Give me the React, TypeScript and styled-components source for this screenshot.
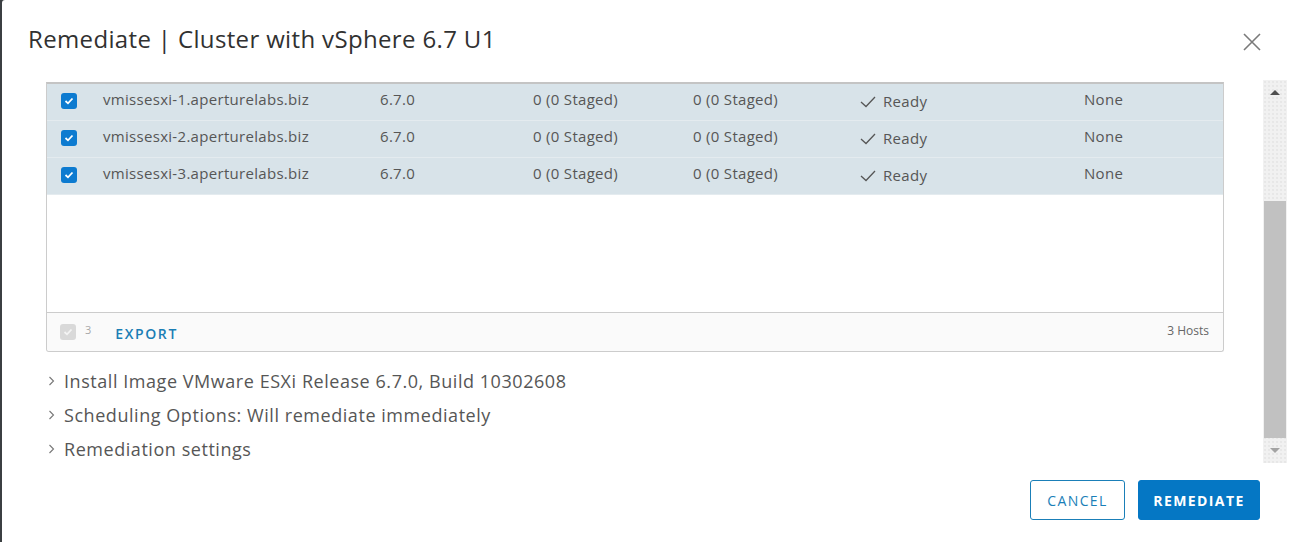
import React from "react";
import styled, { createGlobalStyle } from "styled-components";

const Global = createGlobalStyle`
  html, body { margin: 0; padding: 0; background: #3b3f42; }
  body { font-family: "Open Sans", "Liberation Sans", sans-serif; }
  * { box-sizing: border-box; }
`;

const Page = styled.div`
  width: 1292px;
  height: 542px;
  display: flex;
  background: #3b3f42;
  padding-left: 2px;
`;

const Modal = styled.div`
  flex: 1;
  background: #fff;
  border-radius: 3px 0 0 0;
  display: flex;
  flex-direction: column;
`;

const Header = styled.div`
  height: 80px;
  display: flex;
  align-items: flex-start;
  justify-content: space-between;
  padding: 23px 30px 0 26px;
`;

const Title = styled.h3`
  margin: 0;
  font-size: 24px;
  font-weight: 400;
  line-height: 32px;
  color: #313131;
  letter-spacing: 0.35px;
`;

const Close = styled.button`
  border: 0;
  background: none;
  padding: 0;
  margin-top: 9px;
  width: 20px;
  height: 20px;
  cursor: pointer;
`;

const Body = styled.div`
  height: 383px;
  display: flex;
  padding-left: 44px;
  padding-right: 5px;
`;

const Content = styled.div`
  flex: 1;
  padding-top: 2px;
  padding-right: 39px;
`;

const GridBox = styled.div`
  border: 1px solid #ccc;
  border-top: 2px solid #c4c4c4;
  border-radius: 0 0 3px 3px;
  display: flex;
  flex-direction: column;
  height: 270px;
`;

const Rows = styled.div`
  flex: 1;
`;

const Row = styled.div`
  display: grid;
  grid-template-columns: 56px 277px 153px 160px 167px 224px 1fr;
  height: 37px;
  background: #d8e3e9;
  border-bottom: 1px solid #e4ebef;
  font-size: 15px;
  letter-spacing: 0.3px;
  color: #565656;
`;

const Cell = styled.div<{ $top?: number }>`
  padding-top: ${(p) => p.$top ?? 6}px;
  line-height: 19px;
  white-space: nowrap;
  display: flex;
  align-items: flex-start;
  gap: 7px;
`;

const CheckCell = styled.div`
  padding: 9px 0 0 14px;
`;

const Box = styled.span<{ $disabled?: boolean }>`
  width: 16px;
  height: 16px;
  border-radius: 3px;
  background: ${(p) => (p.$disabled ? "#d9d9d9" : "#0d7bd0")};
  display: flex;
  align-items: center;
  justify-content: center;
`;

const GridFooter = styled.div`
  height: 39px;
  border-top: 1px solid #ccc;
  background: #fafafa;
  display: flex;
  align-items: center;
  padding: 0 14px 0 13px;
  border-radius: 0 0 3px 3px;
`;

const Count = styled.span`
  font-size: 11px;
  color: #a8a8a8;
  margin-left: 9px;
  margin-top: -6px;
`;

const Export = styled.button`
  margin-left: 24px;
  border: 0;
  background: none;
  padding: 0;
  font-family: inherit;
  font-size: 14px;
  font-weight: 600;
  letter-spacing: 1.6px;
  color: #1b7eb5;
  margin-top: 2px;
`;

const Hosts = styled.span`
  margin-left: auto;
  font-size: 12px;
  color: #666;
  margin-top: -3px;
`;

const Sections = styled.div`
  margin-top: 12px;
`;

const Section = styled.div`
  height: 34px;
  display: flex;
  align-items: center;
  gap: 8px;
  padding-left: 2px;
  font-size: 18px;
  letter-spacing: 0.55px;
  color: #565656;
`;

const Scrollbar = styled.div`
  width: 24px;
  display: flex;
  flex-direction: column;
  background-color: #f1f1f1;
  background-image: radial-gradient(#dcdcdc 0.6px, transparent 0.8px);
  background-size: 4px 4px;
`;

const Arrow = styled.div<{ $down?: boolean }>`
  height: 25px;
  display: flex;
  align-items: center;
  justify-content: center;
  &::after {
    content: "";
    width: 0;
    height: 0;
    border-left: 5px solid transparent;
    border-right: 5px solid transparent;
    ${(p) =>
      p.$down
        ? "border-top: 5px solid #a3a3a3;"
        : "border-bottom: 5px solid #505050;"}
  }
`;

const Track = styled.div`
  flex: 1;
  display: flex;
  flex-direction: column;
  padding: 96px 1px 0 1px;
`;

const Thumb = styled.div`
  flex: 1;
  background: #c1c1c1;
`;

const Footer = styled.div`
  flex: 1;
  display: flex;
  justify-content: flex-end;
  align-items: flex-start;
  gap: 13px;
  padding: 17px 32px 0 0;
`;

const Button = styled.button<{ $primary?: boolean }>`
  height: 40px;
  padding: 0 14px;
  border-radius: 3px;
  font-family: inherit;
  font-size: 14px;
  font-weight: ${(p) => (p.$primary ? 700 : 500)};
  letter-spacing: 1.4px;
  border: 1px solid ${(p) => (p.$primary ? "#0577c4" : "#1a7fb8")};
  background: ${(p) => (p.$primary ? "#0577c4" : "#fff")};
  color: ${(p) => (p.$primary ? "#fff" : "#1a7fb8")};
  min-width: ${(p) => (p.$primary ? 122 : 95)}px;
`;

const Tick = ({ color = "#fff" }: { color?: string }) => (
  <svg width="10" height="8" viewBox="0 0 10 8">
    <path d="M1.5 4 L4 6.3 L8.5 1.5" fill="none" stroke={color} strokeWidth="1.8" />
  </svg>
);

const ReadyCheck = () => (
  <svg width="16" height="12" viewBox="0 0 16 12" style={{ marginTop: 4 }}>
    <path d="M1 6 L6 10.5 L15 1" fill="none" stroke="#565656" strokeWidth="1.3" />
  </svg>
);

const Chevron = () => (
  <svg width="8" height="10" viewBox="0 0 8 10">
    <path d="M1.5 1 L5.5 5 L1.5 9" fill="none" stroke="#777" strokeWidth="1.1" />
  </svg>
);

const hosts = [
  "vmissesxi-1.aperturelabs.biz",
  "vmissesxi-2.aperturelabs.biz",
  "vmissesxi-3.aperturelabs.biz",
];

const sections = [
  "Install Image VMware ESXi Release 6.7.0, Build 10302608",
  "Scheduling Options: Will remediate immediately",
  "Remediation settings",
];

export default function App() {
  return (
    <>
      <Global />
      <Page>
        <Modal>
          <Header>
            <Title>Remediate | Cluster with vSphere 6.7 U1</Title>
            <Close aria-label="Close">
              <svg width="20" height="20" viewBox="0 0 20 20">
                <path d="M2 2 L18 18 M18 2 L2 18" stroke="#7a7a7a" strokeWidth="1.6" />
              </svg>
            </Close>
          </Header>
          <Body>
            <Content>
              <GridBox>
                <Rows>
                  {hosts.map((h) => (
                    <Row key={h}>
                      <CheckCell>
                        <Box>
                          <Tick />
                        </Box>
                      </CheckCell>
                      <Cell>{h}</Cell>
                      <Cell>6.7.0</Cell>
                      <Cell>0 (0 Staged)</Cell>
                      <Cell>0 (0 Staged)</Cell>
                      <Cell $top={8}>
                        <ReadyCheck />
                        Ready
                      </Cell>
                      <Cell>None</Cell>
                    </Row>
                  ))}
                </Rows>
                <GridFooter>
                  <Box $disabled>
                    <Tick color="#f4f4f4" />
                  </Box>
                  <Count>3</Count>
                  <Export>EXPORT</Export>
                  <Hosts>3 Hosts</Hosts>
                </GridFooter>
              </GridBox>
              <Sections>
                {sections.map((s) => (
                  <Section key={s}>
                    <Chevron />
                    {s}
                  </Section>
                ))}
              </Sections>
            </Content>
            <Scrollbar>
              <Arrow />
              <Track>
                <Thumb />
              </Track>
              <Arrow $down />
            </Scrollbar>
          </Body>
          <Footer>
            <Button>CANCEL</Button>
            <Button $primary>REMEDIATE</Button>
          </Footer>
        </Modal>
      </Page>
    </>
  );
}
